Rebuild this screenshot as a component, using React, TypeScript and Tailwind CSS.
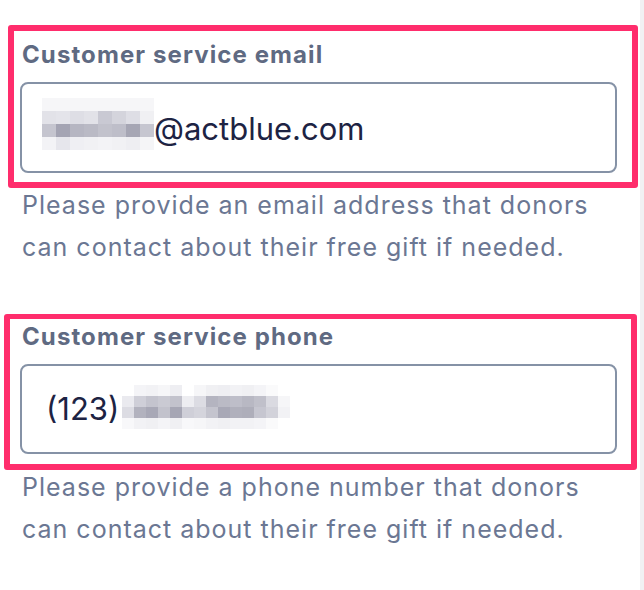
const emailBlur = [
  ['bg-[#f6f6f8]', 'bg-[#f6f6f8]', 'bg-[#f6f6f8]', 'bg-[#f6f6f8]', 'bg-[#f6f6f8]', 'bg-[#f6f6f8]', 'bg-[#f6f6f8]', 'bg-[#f6f6f8]'],
  ['bg-[#e2e2e8]', 'bg-[#e4e4ea]', 'bg-[#dedee5]', 'bg-[#e2e2e8]', 'bg-[#c9c9d3]', 'bg-[#d4d4dc]', 'bg-[#dedee5]', 'bg-[#f0f0f3]'],
  ['bg-[#c5c5cf]', 'bg-[#a4a4b3]', 'bg-[#b6b6c2]', 'bg-[#babac5]', 'bg-[#c2c2cc]', 'bg-[#bebec9]', 'bg-[#a6a6b4]', 'bg-[#c6c6d0]'],
  ['bg-[#f3f3f6]', 'bg-[#e6e6ec]', 'bg-[#efeff3]', 'bg-[#f1f1f4]', 'bg-[#f3f3f6]', 'bg-[#f1f1f4]', 'bg-[#eeeef2]', 'bg-[#f5f5f7]'],
]

const phoneBlur = [
  ['bg-[#ffffff]', 'bg-[#f4f4f7]', 'bg-[#f2f2f5]', 'bg-[#f6f6f8]', 'bg-[#eeeef2]', 'bg-[#ffffff]', 'bg-[#f6f6f8]', 'bg-[#f0f0f3]', 'bg-[#eeeef2]', 'bg-[#f2f2f5]', 'bg-[#f0f0f3]', 'bg-[#f4f4f7]', 'bg-[#fafafb]', 'bg-[#ffffff]'],
  ['bg-[#eaeaef]', 'bg-[#cfcfd8]', 'bg-[#c4c4ce]', 'bg-[#cacad3]', 'bg-[#c2c2cc]', 'bg-[#ededf1]', 'bg-[#dcdce3]', 'bg-[#b4b4c0]', 'bg-[#babac5]', 'bg-[#bebec9]', 'bg-[#b8b8c3]', 'bg-[#c0c0ca]', 'bg-[#dadae1]', 'bg-[#f6f6f8]'],
  ['bg-[#dcdce3]', 'bg-[#b2b2be]', 'bg-[#a8a8b6]', 'bg-[#c2c2cc]', 'bg-[#a6a6b4]', 'bg-[#cfcfd8]', 'bg-[#d4d4dc]', 'bg-[#c4c4ce]', 'bg-[#a8a8b6]', 'bg-[#b0b0bc]', 'bg-[#aeaeba]', 'bg-[#c6c6d0]', 'bg-[#d2d2da]', 'bg-[#f2f2f5]'],
  ['bg-[#f8f8fa]', 'bg-[#f2f2f5]', 'bg-[#f0f0f3]', 'bg-[#f4f4f7]', 'bg-[#f0f0f3]', 'bg-[#f8f8fa]', 'bg-[#f6f6f8]', 'bg-[#f2f2f5]', 'bg-[#f0f0f3]', 'bg-[#f2f2f5]', 'bg-[#f2f2f5]', 'bg-[#f4f4f7]', 'bg-[#fafafb]', 'bg-[#ffffff]'],
]

// pixelated redaction block
function Mosaic({ rows, cell }: { rows: string[][]; cell: string }) {
  return (
    <div className="flex flex-col">
      {rows.map((row, i) => (
        <div key={i} className="flex">
          {row.map((c, j) => (
            <div key={j} className={`${cell} ${c}`} />
          ))}
        </div>
      ))}
    </div>
  )
}

export default function App() {
  return (
    <div className="flex min-h-[590px] bg-white font-['Inter','Noto_Sans',sans-serif]">
      <div className="flex-1">
        {/* Customer service email */}
        <div className="mt-[25px] ml-[8px] w-[630px] rounded-[3px] border-[6px] border-[#ff2d6c] pt-[10px] pb-[9px] pl-[6px] pr-[15px]">
          <label className="block pl-[2px] text-[24px] leading-[28px] font-bold tracking-[1.1px] text-[#5f6a82]">
            Customer service email
          </label>
          <div className="mt-[13px] flex h-[91px] items-center rounded-[8px] border-2 border-[#8592a6] pl-[20px]">
            <div className="mt-[-7px]">
              <Mosaic rows={emailBlur} cell="w-[14px] h-[13px]" />
            </div>
            <span className="mt-[3px] text-[31px] text-[#1d2343]">@actblue.com</span>
          </div>
        </div>
        <p className="mt-[-4px] ml-[22px] w-[600px] text-[25px] leading-[42px] tracking-[1px] text-[#6b7793]">
          Please provide an email address that donors can contact about their free gift if needed.
        </p>

        {/* Customer service phone */}
        <div className="mt-[46px] ml-[4px] w-[633px] rounded-[3px] border-[6px] border-t-[5px] border-[#ff2d6c] pt-[4px] pb-[10px] pl-[10px] pr-[14px]">
          <label className="block pl-[2px] text-[24px] leading-[28px] font-bold tracking-[1.1px] text-[#5f6a82]">
            Customer service phone
          </label>
          <div className="mt-[13px] flex h-[90px] items-center rounded-[8px] border-2 border-[#8592a6] pl-[24px]">
            <span className="text-[31px] text-[#1d2343]">(123)</span>
            <div className="mt-[-5px] ml-[3px]">
              <Mosaic rows={phoneBlur} cell="w-[12px] h-[11px]" />
            </div>
          </div>
        </div>
        <p className="mt-[-4px] ml-[22px] w-[600px] text-[25px] leading-[42px] tracking-[1px] text-[#6b7793]">
          Please provide a phone number that donors can contact about their free gift if needed.
        </p>
      </div>
      <div className="w-[4px] bg-[#f1f1f3]" />
    </div>
  )
}
